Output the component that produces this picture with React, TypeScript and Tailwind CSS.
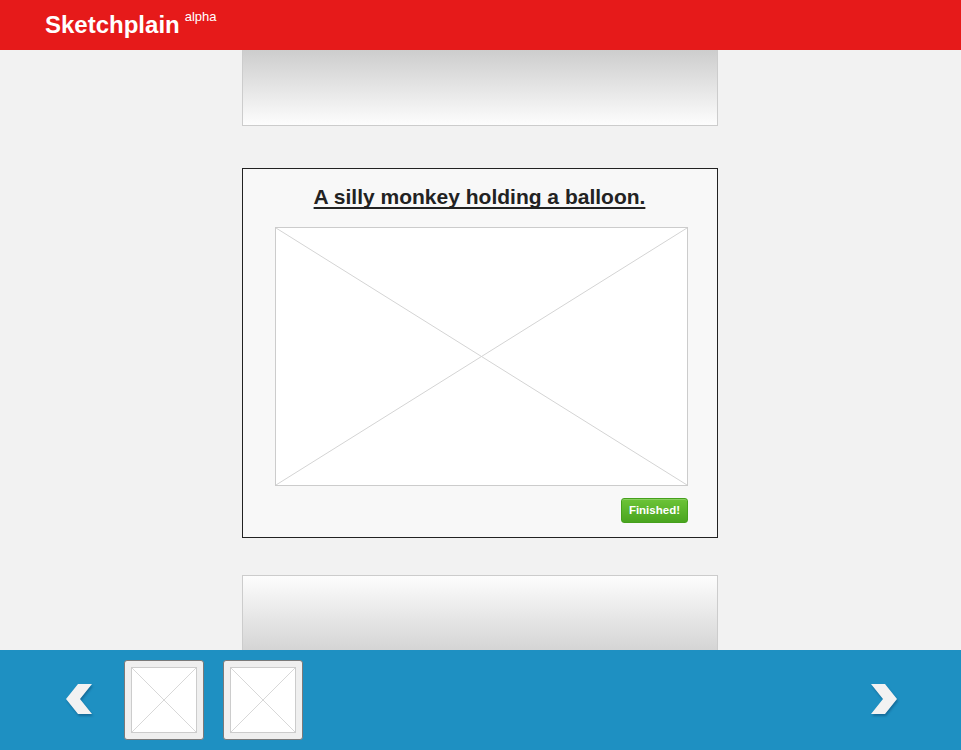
import React from 'react';

const Placeholder: React.FC<{ className?: string; stroke?: string }> = ({ className = '', stroke = '#d4d4d4' }) => (
  <div className={`relative bg-white ${className}`}>
    <svg className="absolute inset-0 w-full h-full" preserveAspectRatio="none" viewBox="0 0 100 100">
      <line x1="0" y1="0" x2="100" y2="100" stroke={stroke} strokeWidth="1" vectorEffect="non-scaling-stroke" />
      <line x1="100" y1="0" x2="0" y2="100" stroke={stroke} strokeWidth="1" vectorEffect="non-scaling-stroke" />
    </svg>
  </div>
);

const Chevron: React.FC<{ dir: 'left' | 'right' }> = ({ dir }) => (
  <svg width="32" height="34" viewBox="0 0 32 34" className="drop-shadow-[1px_2px_1px_rgba(0,40,80,0.35)]">
    {dir === 'left' ? (
      <polygon points="27,1 13,1 1,16 13,31 27,31 15,16" fill="#f2f2f2" />
    ) : (
      <polygon points="1,1 15,1 27,16 15,31 1,31 13,16" fill="#f2f2f2" />
    )}
  </svg>
);

const Thumb: React.FC = () => (
  <div className="w-[80px] h-[80px] rounded-[3px] border border-[#7a7a7a] bg-[#efefef] p-[6px]">
    <Placeholder className="w-full h-full border border-[#cccccc]" stroke="#d8d8d8" />
  </div>
);

export default function App() {
  return (
    <div className="h-screen flex flex-col bg-[#f2f2f2] overflow-hidden font-['Liberation_Sans',Arial,sans-serif]">
      {/* Header */}
      <header className="h-[50px] shrink-0 bg-[#e61a1a] flex items-center pl-[45px]">
        <span className="text-white font-bold text-[24px] leading-none">Sketchplain</span>
        <span className="text-white text-[13px] leading-none ml-[5px] -mt-[18px]">alpha</span>
      </header>

      {/* Cards */}
      <main className="flex-1 overflow-hidden flex flex-col items-center pr-[1px]">
        <div className="w-[476px] h-[76px] shrink-0 border border-t-0 border-[#cccccc] bg-gradient-to-b from-[#cdcdcd] to-[#fdfdfd]" />

        <div className="w-[476px] mt-[42px] shrink-0 border border-[#222222] bg-[#f8f8f8] pl-[32px] pr-[29px] pt-[15px] pb-[14px] flex flex-col">
          <h1 className="pr-[4px] text-center text-[21px] font-bold text-[#222222] underline underline-offset-[3px] decoration-[1.5px] [text-decoration-skip-ink:none] leading-[26px]">
            A silly monkey holding a balloon.
          </h1>
          <Placeholder className="mt-[17px] w-full h-[259px] border border-[#cccccc]" />
          <div className="flex justify-end mt-[12px]">
            <button className="h-[25px] px-[7px] rounded-[3px] bg-gradient-to-b from-[#6cc437] to-[#4aa51f] border border-[#45a01c] text-white text-[11.5px] font-bold leading-none shadow-[inset_0_1px_0_rgba(255,255,255,0.2)]">
              Finished!
            </button>
          </div>
        </div>

        <div className="w-[476px] h-[90px] mt-[37px] shrink-0 border border-b-0 border-[#cccccc] bg-gradient-to-b from-[#fdfdfd] to-[#cdcdcd]" />
      </main>

      {/* Footer */}
      <footer className="h-[100px] shrink-0 bg-[#1e90c2] flex items-center pl-[65px] pr-[59px]">
        <Chevron dir="left" />
        <div className="flex gap-[19px] ml-[27px]">
          <Thumb />
          <Thumb />
        </div>
        <div className="flex-1" />
        <Chevron dir="right" />
      </footer>
    </div>
  );
}
